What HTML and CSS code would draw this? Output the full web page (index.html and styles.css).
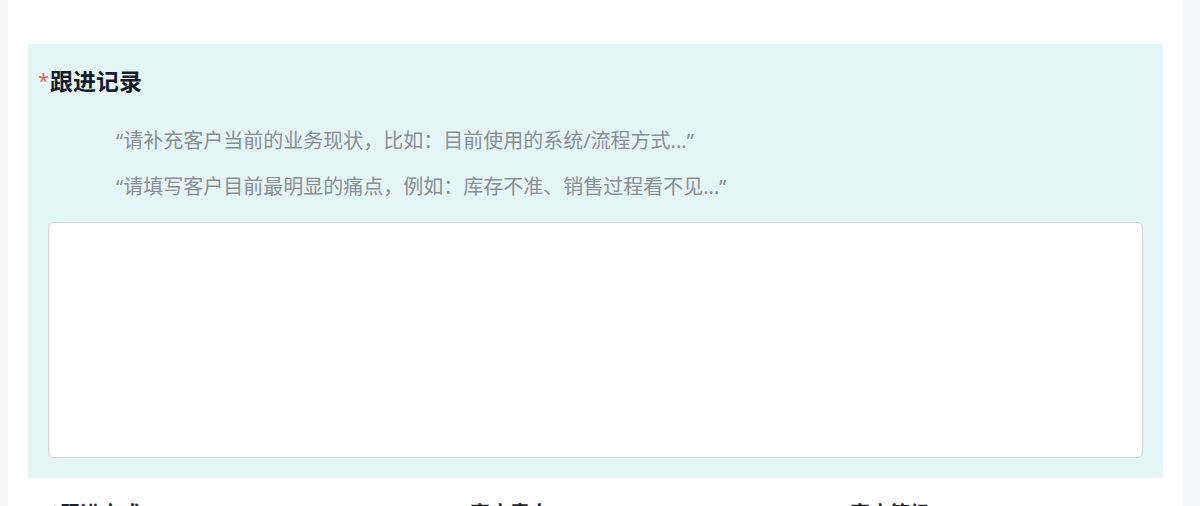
FILE: index.html
```html
<!DOCTYPE html>
<html lang="zh-CN">
<head>
<meta charset="utf-8">
<link rel="stylesheet" href="styles.css">
</head>
<body>
<div class="panel">
  <section class="record">
    <h2 class="title"><span class="req">*</span>跟进记录</h2>
    <div class="hints">
      <p class="hint">“请补充客户当前的业务现状，比如：目前使用的系统/流程方式...”</p>
      <p class="hint">“请填写客户目前最明显的痛点，例如：库存不准、销售过程看不见...”</p>
    </div>
    <textarea class="box"></textarea>
  </section>
  <div class="fields">
    <div class="field"><span class="req-gray">*</span>跟进方式</div>
    <div class="field">客户意向</div>
    <div class="field">客户等级</div>
  </div>
</div>
</body>
</html>
```
FILE: styles.css
```css
html, body {
  margin: 0;
  padding: 0;
}
body {
  background: #f4f5f7;
  font-family: "Noto Sans CJK SC", "Noto Sans", sans-serif;
  height: 506px;
  overflow: hidden;
}
.panel {
  margin-left: 8px;
  width: 1175px;
  background: #ffffff;
  padding: 44px 20px 0;
  box-sizing: border-box;
  min-height: 506px;
}
.record {
  background: #e3f6f5;
  padding: 21px 20px 20px;
  display: flex;
  flex-direction: column;
}
.title {
  margin: 0 0 0 -10px;
  font-size: 23px;
  line-height: 30px;
  font-weight: 700;
  color: #161b2e;
  display: flex;
  align-items: flex-start;
}
.req {
  color: #f05a5a;
  font-family: "Noto Sans", sans-serif;
  font-size: 20px;
  font-weight: 400;
  line-height: 20px;
  margin-top: 6px;
  margin-right: 1px;
}
.hints {
  margin-top: 33px;
  padding-left: 68px;
  display: flex;
  flex-direction: column;
  gap: 20px;
}
.hint {
  margin: 0;
  font-family: "Noto Sans", "Noto Sans CJK SC", sans-serif;
  font-size: 20px;
  line-height: 26px;
  color: #8a8e95;
}
.box {
  margin-top: 22px;
  height: 236px;
  box-sizing: border-box;
  border: 1.5px solid #d2d5d8;
  border-radius: 6px;
  background: #ffffff;
  resize: none;
  display: block;
  width: 100%;
}
.fields {
  margin-top: 22px;
  display: grid;
  grid-template-columns: 420px 380px 1fr;
  padding-left: 22px;
}
.field {
  font-size: 20px;
  line-height: 26px;
  font-weight: 700;
  color: #1f2329;
}
.req-gray {
  color: #c8c8c8;
}
```
